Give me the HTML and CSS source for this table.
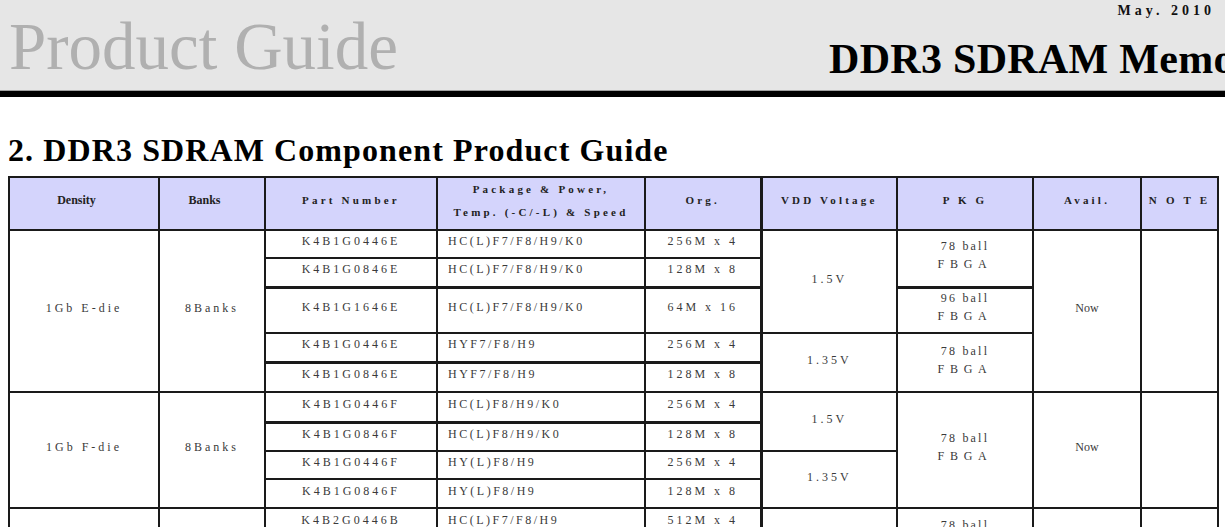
FILE: index.html
```html
<!DOCTYPE html>
<html lang="en">
<head>
<meta charset="utf-8">
<title>Product Guide - DDR3 SDRAM Memory</title>
<link rel="stylesheet" href="styles.css">
</head>
<body>
<header class="masthead">
  <div class="brand">Product Guide</div>
  <div class="doc">
    <div class="date">May. 2010</div>
    <div class="doc-title">DDR3 SDRAM Memory</div>
  </div>
</header>
<div class="rule"></div>

<main class="content">
  <h1 class="section-title">2. DDR3 SDRAM Component Product Guide</h1>
  <table class="guide">
    <colgroup>
      <col class="c-density">
      <col class="c-banks">
      <col class="c-part">
      <col class="c-pkgpow">
      <col class="c-org">
      <col class="c-vdd">
      <col class="c-pkg">
      <col class="c-avail">
      <col class="c-note">
    </colgroup>
    <thead>
      <tr class="h-row">
        <th class="plain">Density</th>
        <th class="plain">Banks</th>
        <th>Part Number</th>
        <th class="two">Package &amp; Power,<br>Temp. (-C/-L) &amp; Speed</th>
        <th class="org">Org.</th>
        <th class="vdd">VDD Voltage</th>
        <th>P K G</th>
        <th>Avail.</th>
        <th>N O T E</th>
      </tr>
    </thead>
    <tbody>
      <tr class="r28">
        <td rowspan="5">1Gb E-die</td>
        <td rowspan="5">8Banks</td>
        <td>K4B1G0446E</td>
        <td class="pp">HC(L)F7/F8/H9/K0</td>
        <td class="org">256M x 4</td>
        <td class="vdd" rowspan="3">1.5V</td>
        <td class="pk" rowspan="2">78 ball<br><span class="fbga">FBGA</span></td>
        <td class="now" rowspan="5">Now</td>
        <td rowspan="5"></td>
      </tr>
      <tr class="r29">
        <td>K4B1G0846E</td>
        <td class="pp">HC(L)F7/F8/H9/K0</td>
        <td class="org">128M x 8</td>
      </tr>
      <tr class="r46">
        <td class="tk">K4B1G1646E</td>
        <td class="pp tk">HC(L)F7/F8/H9/K0</td>
        <td class="org tk">64M x 16</td>
        <td class="pk tk">96 ball<br><span class="fbga">FBGA</span></td>
      </tr>
      <tr class="r29">
        <td>K4B1G0446E</td>
        <td class="pp">HYF7/F8/H9</td>
        <td class="org">256M x 4</td>
        <td class="vdd" rowspan="2">1.35V</td>
        <td class="pk" rowspan="2">78 ball<br><span class="fbga">FBGA</span></td>
      </tr>
      <tr class="r30">
        <td class="tk">K4B1G0846E</td>
        <td class="pp tk">HYF7/F8/H9</td>
        <td class="org tk">128M x 8</td>
      </tr>

      <tr class="r30">
        <td rowspan="4">1Gb F-die</td>
        <td rowspan="4">8Banks</td>
        <td>K4B1G0446F</td>
        <td class="pp">HC(L)F8/H9/K0</td>
        <td class="org">256M x 4</td>
        <td class="vdd" rowspan="2">1.5V</td>
        <td class="pk" rowspan="4">78 ball<br><span class="fbga">FBGA</span></td>
        <td class="now" rowspan="4">Now</td>
        <td rowspan="4"></td>
      </tr>
      <tr class="r29">
        <td class="tk">K4B1G0846F</td>
        <td class="pp tk">HC(L)F8/H9/K0</td>
        <td class="org tk">128M x 8</td>
      </tr>
      <tr class="r28">
        <td>K4B1G0446F</td>
        <td class="pp">HY(L)F8/H9</td>
        <td class="org">256M x 4</td>
        <td class="vdd" rowspan="2">1.35V</td>
      </tr>
      <tr class="r29">
        <td>K4B1G0846F</td>
        <td class="pp">HY(L)F8/H9</td>
        <td class="org">128M x 8</td>
      </tr>

      <tr class="r29">
        <td rowspan="3">2Gb B-die</td>
        <td rowspan="3">8Banks</td>
        <td>K4B2G0446B</td>
        <td class="pp">HC(L)F7/F8/H9</td>
        <td class="org">512M x 4</td>
        <td class="vdd" rowspan="3">1.5V</td>
        <td class="pk" rowspan="2">78 ball<br><span class="fbga">FBGA</span></td>
        <td class="now" rowspan="3">Now</td>
        <td rowspan="3"></td>
      </tr>
      <tr class="r29">
        <td>K4B2G0846B</td>
        <td class="pp">HC(L)F7/F8/H9</td>
        <td class="org">256M x 8</td>
      </tr>
      <tr class="r46">
        <td class="tk">K4B2G1646B</td>
        <td class="pp tk">HC(L)F7/F8/H9</td>
        <td class="org tk">128M x 16</td>
        <td class="pk tk">96 ball<br><span class="fbga">FBGA</span></td>
      </tr>
    </tbody>
  </table>
</main>
</body>
</html>
```

FILE: styles.css
```css
html, body {
  margin: 0;
  padding: 0;
  background: #ffffff;
}

body {
  width: 1225px;
  height: 527px;
  overflow: hidden;
  font-family: "Liberation Serif", "Times New Roman", serif;
  color: #000;
}

.masthead {
  display: flex;
  height: 90px;
  background: #e6e6e6;
  border-bottom: 1px solid #a0a0a0;
}

.brand {
  flex: 0 0 829px;
  box-sizing: border-box;
  padding: 14px 0 0 9px;
  font-size: 67px;
  line-height: 64px;
  color: #b0b0b0;
  white-space: nowrap;
}

.doc {
  flex: 1;
  min-width: 0;
  display: flex;
  flex-direction: column;
}

.date {
  margin-top: 4px;
  padding-right: 10px;
  text-align: right;
  font-weight: bold;
  font-size: 14px;
  line-height: 14px;
  letter-spacing: 4px;
  color: #111;
}

.doc-title {
  margin-top: 20px;
  font-weight: bold;
  font-size: 42px;
  line-height: 42px;
  letter-spacing: 0.3px;
  white-space: nowrap;
  color: #000;
}

.rule {
  height: 6px;
  background: #000;
}

.content {
  padding: 35px 0 0 8px;
}

.section-title {
  margin: 0 0 8px 0;
  font-size: 32px;
  line-height: 36px;
  font-weight: bold;
  letter-spacing: 1.1px;
  white-space: nowrap;
  color: #000;
}

.guide {
  border-collapse: collapse;
  table-layout: fixed;
  width: 1209px;
  border: 2px solid #1a1a1a;
  font-family: "Liberation Serif", "Times New Roman", serif;
}

.c-density { width: 150px; }
.c-banks { width: 106px; }
.c-part { width: 172px; }
.c-pkgpow { width: 208px; }
.c-org { width: 116px; }
.c-vdd { width: 136px; }
.c-pkg { width: 136px; }
.c-avail { width: 108px; }
.c-note { width: 77px; }

.guide th,
.guide td {
  border: 2px solid #1a1a1a;
  padding: 0 0 6px 0;
  vertical-align: middle;
  text-align: center;
  font-family: "Liberation Serif", "Times New Roman", serif;
  font-size: 12px;
  line-height: 18px;
  letter-spacing: 3px;
  color: #3a3a3a;
  white-space: nowrap;
  overflow: hidden;
}

.guide thead tr {
  height: 52px;
}

.guide th {
  background: #d4d4fc;
  font-size: 11px;
  font-weight: bold;
  letter-spacing: 3.2px;
  line-height: 23px;
  color: #222;
}

.guide th.plain {
  font-size: 12px;
  letter-spacing: 0;
  padding-right: 15px;
}

.guide th.two {
  padding-bottom: 5px;
}

.guide .org {
  border-right-width: 3px;
}

.guide .vdd {
  border-left-width: 3px;
}

.guide .tk {
  border-top-width: 3px;
}

.guide td.pp {
  text-align: left;
  padding-left: 10px;
  letter-spacing: 2.5px;
}

.guide td.pk {
  letter-spacing: 2.2px;
}

.fbga {
  letter-spacing: 5.7px;
}

.guide td.now {
  letter-spacing: 0;
  font-size: 12px;
}

.r28 { height: 28px; }
.r29 { height: 29px; }
.r30 { height: 30px; }
.r46 { height: 46px; }
```
